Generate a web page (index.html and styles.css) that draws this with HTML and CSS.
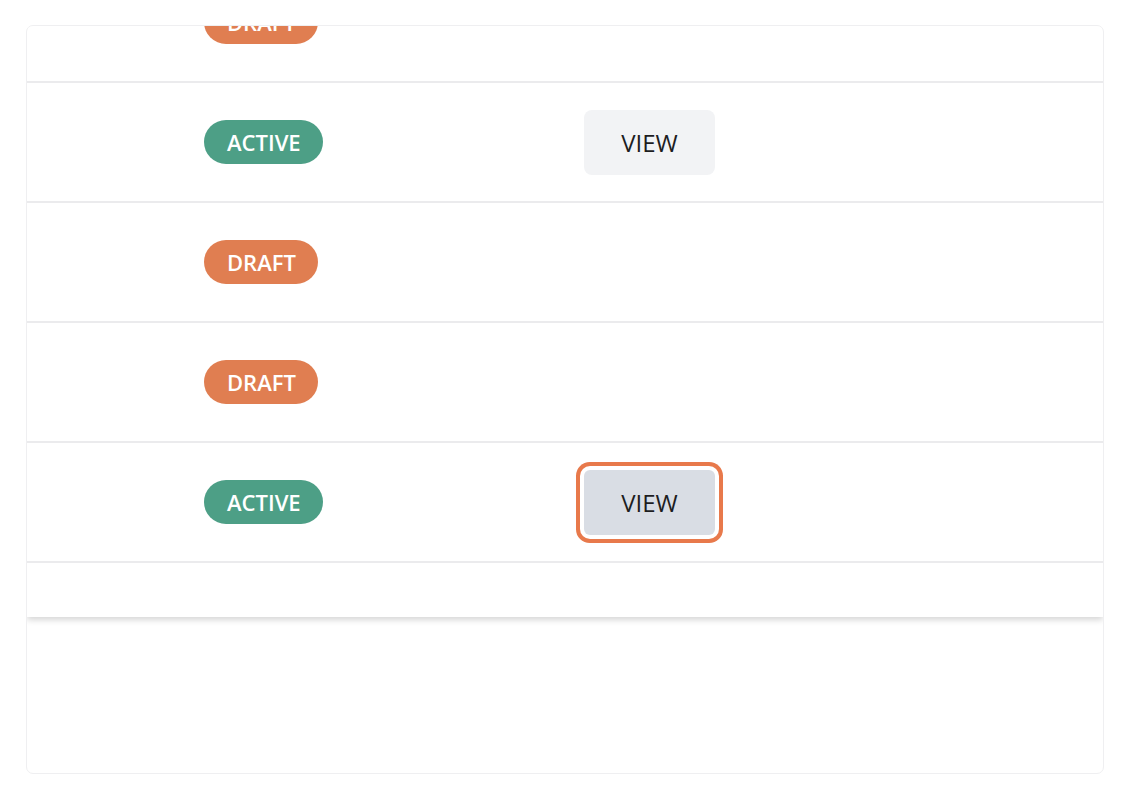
FILE: index.html
```html
<!DOCTYPE html>
<html lang="en">
<head>
<meta charset="utf-8">
<title>Items</title>
<link rel="stylesheet" href="styles.css">
</head>
<body>
  <div class="card">
    <div class="scroll">
      <div class="list">
        <div class="row">
          <div class="cell-status"><span class="badge badge-draft">DRAFT</span></div>
          <div class="cell-action"></div>
        </div>
        <div class="row">
          <div class="cell-status"><span class="badge badge-active">ACTIVE</span></div>
          <div class="cell-action"><button class="btn">VIEW</button></div>
        </div>
        <div class="row">
          <div class="cell-status"><span class="badge badge-draft">DRAFT</span></div>
          <div class="cell-action"></div>
        </div>
        <div class="row">
          <div class="cell-status"><span class="badge badge-draft">DRAFT</span></div>
          <div class="cell-action"></div>
        </div>
        <div class="row">
          <div class="cell-status"><span class="badge badge-active">ACTIVE</span></div>
          <div class="cell-action"><button class="btn btn-focus">VIEW</button></div>
        </div>
        <div class="row row-empty"></div>
      </div>
    </div>
  </div>
</body>
</html>
```

FILE: styles.css
```css
html, body {
  margin: 0;
  padding: 0;
  background: #ffffff;
  font-family: "Open Sans", "Noto Sans", sans-serif;
}

body {
  padding: 25px 24px 25px 26px;
}

.card {
  height: 749px;
  box-sizing: border-box;
  border: 1.5px solid #efeff1;
  border-radius: 7px;
  background: #fff;
  overflow: hidden;
}

.scroll {
  height: 591px;
  overflow: hidden;
  box-shadow: 0 3px 6px rgba(0, 0, 0, 0.16);
  background: #fff;
}

.list {
  margin-top: -63px;
}

.row {
  height: 118px;
  border-bottom: 2px solid #ebebed;
  display: grid;
  grid-template-columns: 557px 1fr;
  align-items: center;
}

.cell-status {
  padding-left: 177px;
}

.badge {
  display: inline-flex;
  align-items: center;
  height: 44px;
  padding: 0 22px 0 23px;
  border-radius: 22px;
  color: #fff;
  font-size: 22px;
  font-weight: 600;
  box-sizing: border-box;
}

.badge-active {
  background: #4d9f86;
}

.badge-draft {
  background: #e07e51;
}

.btn {
  width: 131px;
  height: 65px;
  border: none;
  border-radius: 8px;
  background: #f2f3f5;
  color: #1d1d1f;
  font-family: "Open Sans", "Noto Sans", sans-serif;
  font-size: 24px;
  font-weight: 400;
  padding: 0;
}

.btn-focus {
  background: #d9dde4;
  box-shadow: 0 0 0 4px #ffffff, 0 0 0 8px #e8794b;
  border-radius: 6px;
}
```
